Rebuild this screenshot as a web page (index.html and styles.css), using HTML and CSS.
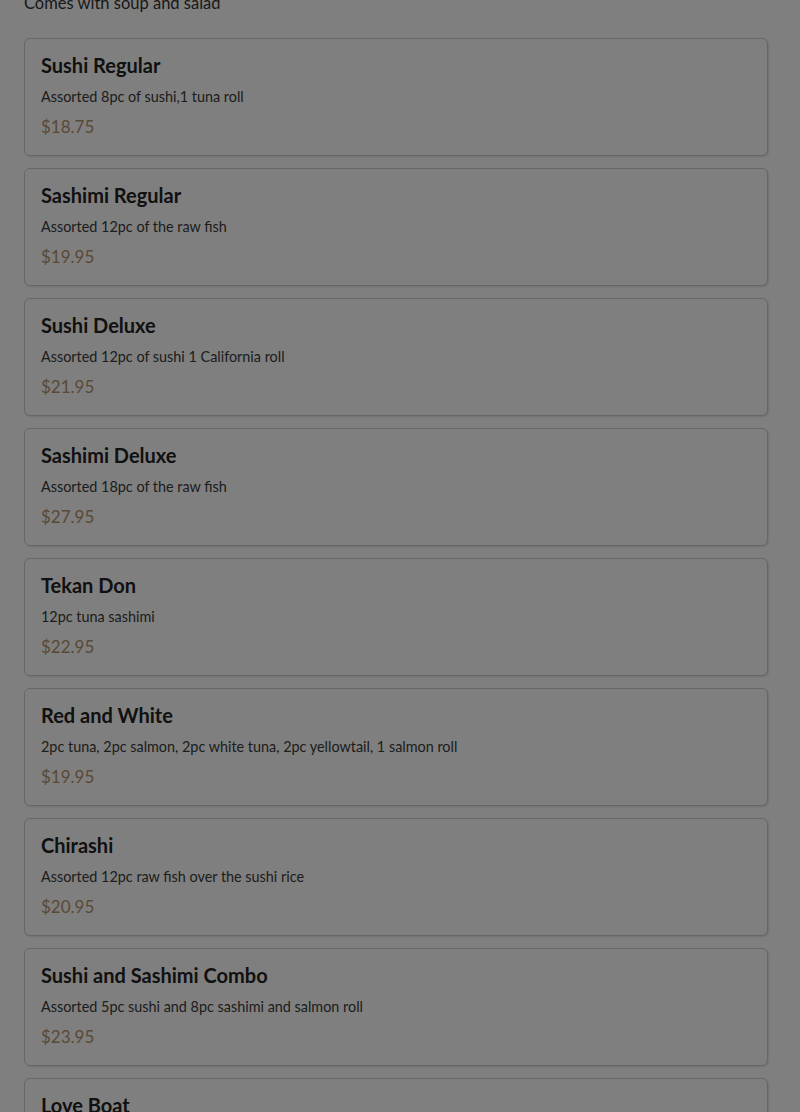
FILE: index.html
```html
<!DOCTYPE html>
<html lang="en">
<head>
<meta charset="utf-8">
<title>Menu</title>
<link rel="stylesheet" href="styles.css">
</head>
<body>
<main class="menu">
  <p class="note">Comes with soup and salad</p>
  <div class="list">
    <div class="card"><h3 class="name">Sushi Regular</h3><p class="desc">Assorted 8pc of sushi,1 tuna roll</p><p class="price">$18.75</p></div>
    <div class="card"><h3 class="name">Sashimi Regular</h3><p class="desc">Assorted 12pc of the raw fish</p><p class="price">$19.95</p></div>
    <div class="card"><h3 class="name">Sushi Deluxe</h3><p class="desc">Assorted 12pc of sushi 1 California roll</p><p class="price">$21.95</p></div>
    <div class="card"><h3 class="name">Sashimi Deluxe</h3><p class="desc">Assorted 18pc of the raw fish</p><p class="price">$27.95</p></div>
    <div class="card"><h3 class="name">Tekan Don</h3><p class="desc">12pc tuna sashimi</p><p class="price">$22.95</p></div>
    <div class="card"><h3 class="name">Red and White</h3><p class="desc">2pc tuna, 2pc salmon, 2pc white tuna, 2pc yellowtail, 1 salmon roll</p><p class="price">$19.95</p></div>
    <div class="card"><h3 class="name">Chirashi</h3><p class="desc">Assorted 12pc raw fish over the sushi rice</p><p class="price">$20.95</p></div>
    <div class="card"><h3 class="name">Sushi and Sashimi Combo</h3><p class="desc">Assorted 5pc sushi and 8pc sashimi and salmon roll</p><p class="price">$23.95</p></div>
    <div class="card"><h3 class="name">Love Boat</h3><p class="desc">Assorted sushi and sashimi</p><p class="price">$45.95</p></div>
  </div>
</main>
<div class="overlay"></div>
</body>
</html>
```

FILE: styles.css
```css
html, body {
  margin: 0;
  padding: 0;
  background: #ffffff;
  font-family: "Lato", "Noto Sans", sans-serif;
  color: #222;
  overflow: hidden;
}
.menu {
  padding: 0 32px 0 24px;
  margin-top: -9px;
}
.note {
  margin: 0 0 23px;
  font-size: 16.5px;
  line-height: 24px;
  color: #333;
}
.list {
  display: flex;
  flex-direction: column;
  gap: 12px;
}
.card {
  border: 1px solid #cdcdcd;
  border-radius: 6px;
  padding: 14px 16px 17px;
  background: #fff;
  box-shadow: 1px 1px 2px rgba(0,0,0,0.12);
  display: flex;
  flex-direction: column;
  gap: 9px;
}
.name {
  margin: 0;
  font-size: 20px;
  line-height: 24px;
  font-weight: 700;
  color: #222;
}
.desc {
  margin: 0;
  font-size: 14.4px;
  line-height: 21px;
  color: #3a3a3a;
}
.price {
  margin: 0;
  font-size: 17px;
  line-height: 22px;
  color: #b3926a;
}
.overlay {
  position: fixed;
  inset: 0;
  background: rgba(0,0,0,0.5);
}
```
